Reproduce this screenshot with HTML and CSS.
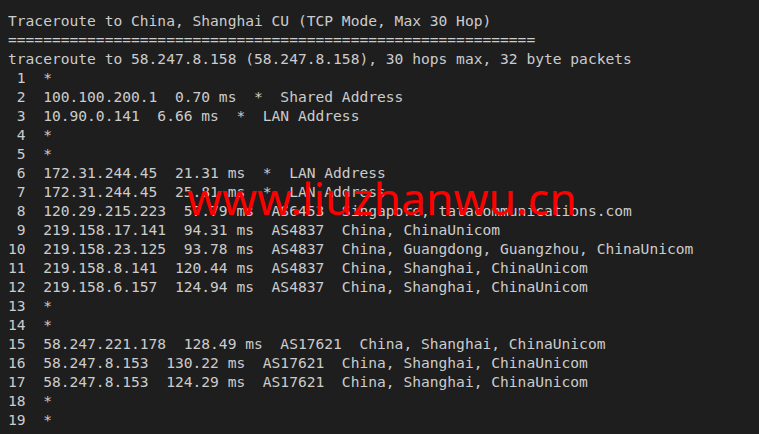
FILE: index.html
```html
<!DOCTYPE html>
<html>
<head>
<meta charset="utf-8">
<link rel="stylesheet" href="styles.css">
</head>
<body>
<div class="screen">
<pre class="term">Traceroute to China, Shanghai CU (TCP Mode, Max 30 Hop)
============================================================
traceroute to 58.247.8.158 (58.247.8.158), 30 hops max, 32 byte packets
 1  *
 2  100.100.200.1  0.70 ms  *  Shared Address
 3  10.90.0.141  6.66 ms  *  LAN Address
 4  *
 5  *
 6  172.31.244.45  21.31 ms  *  LAN Address
 7  172.31.244.45  25.81 ms  *  LAN Address
 8  120.29.215.223  57.79 ms  AS6453  Singapore, tatacommunications.com
 9  219.158.17.141  94.31 ms  AS4837  China, ChinaUnicom
10  219.158.23.125  93.78 ms  AS4837  China, Guangdong, Guangzhou, ChinaUnicom
11  219.158.8.141  120.44 ms  AS4837  China, Shanghai, ChinaUnicom
12  219.158.6.157  124.94 ms  AS4837  China, Shanghai, ChinaUnicom
13  *
14  *
15  58.247.221.178  128.49 ms  AS17621  China, Shanghai, ChinaUnicom
16  58.247.8.153  130.22 ms  AS17621  China, Shanghai, ChinaUnicom
17  58.247.8.153  124.29 ms  AS17621  China, Shanghai, ChinaUnicom
18  *
19  *
20  *</pre>
<div class="watermark">www.liuzhanwu.cn</div>
</div>
</body>
</html>
```

FILE: styles.css
```css
html, body {
  margin: 0;
  padding: 0;
  background: #1e1e1e;
  overflow: hidden;
}
.screen {
  position: relative;
  width: 759px;
  height: 434px;
  overflow: hidden;
  background: #1e1e1e;
}
.term {
  margin: 0;
  padding: 11px 8px 0 8px;
  font-family: "DejaVu Sans Mono", "Liberation Mono", monospace;
  font-size: 14.6px;
  line-height: 19px;
  color: #cccccc;
  white-space: pre;
}
.watermark {
  position: absolute;
  left: 187px;
  top: 168px;
  font-family: "Noto Sans", sans-serif;
  font-size: 44.5px;
  line-height: 60px;
  color: #ff0000;
  white-space: nowrap;
}
```
